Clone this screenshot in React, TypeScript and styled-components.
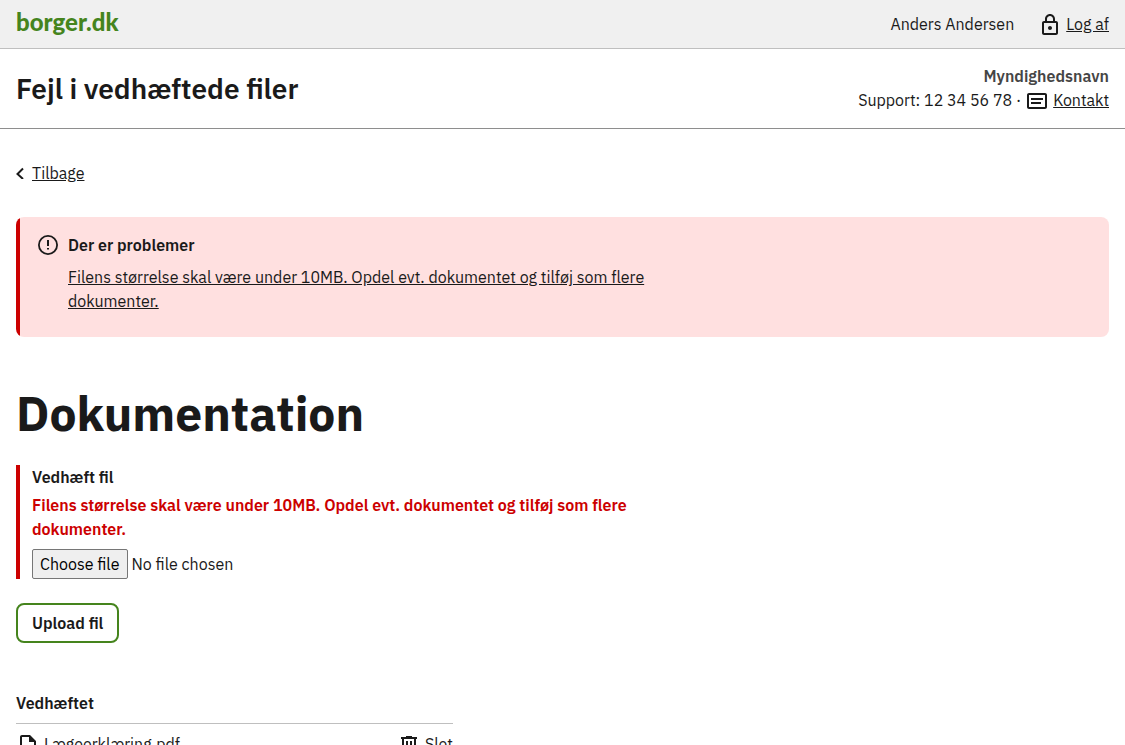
import React, { useState } from "react";
import styled, { createGlobalStyle } from "styled-components";

const GlobalStyle = createGlobalStyle`
  *, *::before, *::after { box-sizing: border-box; }
  body {
    margin: 0;
    background: #fff;
    color: #1a1a1a;
    font-family: "IBM Plex Sans", "Noto Sans", "Open Sans", sans-serif;
    font-size: 16px;
    line-height: 24px;
  }
  h1, h2, p, ul { margin: 0; padding: 0; }
  a { color: inherit; }
`;

const TopBar = styled.div`
  display: flex;
  align-items: center;
  justify-content: space-between;
  min-height: 49px;
  padding: 0 16px;
  background: #f0f0f0;
  border-bottom: 1px solid #bfbfbf;
`;

const Logo = styled.a`
  color: #45841d;
  font-family: Lato, sans-serif;
  font-size: 24px;
  font-weight: 900;
  line-height: 24px;
  text-decoration: none;
  padding-bottom: 4px;
`;

const Session = styled.div`
  display: flex;
  align-items: center;
  gap: 24px;
`;

const IconText = styled.span<{ $gap?: number }>`
  display: inline-flex;
  align-items: center;
  gap: ${(p) => p.$gap ?? 4}px;
`;

const SolutionHeader = styled.header`
  display: flex;
  align-items: center;
  justify-content: space-between;
  padding: 15px 16px 16px;
  border-bottom: 1px solid #8e8e8e;
`;

const SolutionTitle = styled.p`
  padding-top: 2px;
  font-size: 28px;
  font-weight: 600;
  line-height: 32px;
`;

const Authority = styled.div`
  text-align: right;
`;

const AuthorityName = styled.p`
  color: #454545;
  font-weight: 600;
`;

const Support = styled.p`
  display: flex;
  align-items: center;
  justify-content: flex-end;
  gap: 4px;
`;

const Main = styled.main`
  padding: 32px 16px 48px;
`;

const Alert = styled.section`
  display: flex;
  gap: 8px;
  margin-top: 32px;
  padding: 16px 16px 24px 20px;
  background: linear-gradient(to right, #cc0000 4px, #ffe0e0 4px);
  border-radius: 8px;
`;

const AlertBody = styled.div`
  max-width: 600px;
`;

const AlertTitle = styled.h2`
  margin-bottom: 8px;
  font-size: 16px;
  font-weight: 600;
  line-height: 24px;
`;

const PageTitle = styled.h1`
  margin: 48px 0 24px;
  font-size: 48px;
  font-weight: 700;
  line-height: 56px;
`;

const FieldGroup = styled.div`
  max-width: 640px;
  padding-left: 12px;
  border-left: 4px solid #cc0000;
`;

const Label = styled.label`
  display: block;
  font-weight: 600;
`;

const FieldError = styled.p`
  margin: 4px 0 8px;
  color: #cc0000;
  font-weight: 600;
`;

const FilePicker = styled.div`
  position: relative;
  display: flex;
  align-items: center;
  gap: 4px;
`;

const FileInput = styled.input`
  position: absolute;
  inset: 0;
  width: 100%;
  opacity: 0;
`;

const PickerButton = styled.span`
  padding: 2px 7px;
  background: #efefef;
  color: #000;
  border: 1px solid #767676;
  border-radius: 2px;

  ${FileInput}:focus-visible + & {
    outline: 2px solid #1a1a1a;
  }
`;

const UploadButton = styled.button`
  height: 40px;
  margin-top: 24px;
  padding: 0 14px;
  background: #fff;
  color: inherit;
  border: 2px solid #45841d;
  border-radius: 8px;
  font: inherit;
  font-weight: 600;
`;

const Attachments = styled.section`
  max-width: 437px;
  margin-top: 48px;
`;

const ListTitle = styled.h2`
  margin-bottom: 8px;
  font-size: 16px;
  font-weight: 600;
  line-height: 24px;
`;

const FileList = styled.ul`
  list-style: none;
  border-top: 1px solid #bfbfbf;
`;

const FileRow = styled.li`
  display: flex;
  justify-content: space-between;
  padding: 8px 0;
  border-bottom: 1px solid #bfbfbf;
`;

const DeleteButton = styled.button`
  display: inline-flex;
  align-items: center;
  gap: 4px;
  padding: 0;
  background: none;
  color: inherit;
  border: 0;
  font: inherit;
`;

const Icon = styled.svg`
  flex: none;
  display: block;
  width: 24px;
  height: 24px;
  fill: currentColor;
`;

const LockIcon = () => (
  <Icon viewBox="0 0 24 24" aria-hidden="true">
    <path d="M18 9h-1V7c0-2.760-2.240-5-5-5S7 4.240 7 7v2H6c-1.100 0-2 .9-2 2v10c0 1.100.9 2 2 2h12c1.100 0 2-.9 2-2V11c0-1.100-.9-2-2-2zM9 7c0-1.660 1.340-3 3-3s3 1.340 3 3v2H9V7zm9 14H6V11h12v10zm-6-3c1.100 0 2-.9 2-2s-.9-2-2-2-2 .9-2 2 .9 2 2 2z" />
  </Icon>
);

const ContactIcon = () => (
  <Icon viewBox="0 0 24 24" aria-hidden="true">
    <path d="M20 5H4c-1.100 0-2 .9-2 2v12c0 1.100.9 2 2 2h16c1.100 0 2-.9 2-2V7c0-1.100-.9-2-2-2zm0 14H4V7h16v12zM6 10h12v2H6zm0 4h10v2H6z" />
  </Icon>
);

const BackIcon = styled.svg`
  display: block;
  width: 8px;
  height: 12px;
  fill: none;
  stroke: currentColor;
  stroke-width: 2;
`;

const ErrorIcon = () => (
  <Icon viewBox="0 0 24 24" aria-hidden="true">
    <path d="M12 2a10 10 0 1 0 0 20 10 10 0 0 0 0-20zm0 18.200a8.200 8.200 0 1 1 0-16.400 8.200 8.200 0 0 1 0 16.400zM11 7h2v6h-2zm0 8h2v1.500h-2z" />
  </Icon>
);

const FileIcon = () => (
  <Icon viewBox="0 0 24 24" aria-hidden="true">
    <path d="M14 3H6c-1.100 0-2 .9-2 2v14c0 1.100.9 2 2 2h12c1.100 0 2-.9 2-2V9zM6 19V5h7v5h5v9z" />
  </Icon>
);

const TrashIcon = () => (
  <Icon viewBox="0 0 24 24" aria-hidden="true">
    <path d="M9 4h6v1h5v2h-1v13c0 1.100-.9 2-2 2H7c-1.100 0-2-.9-2-2V7H4V5h5zM7 7v13h10V7zm2 2h2v9H9zm4 0h2v9h-2z" />
  </Icon>
);

const errorText =
  "Filens størrelse skal være under 10MB. Opdel evt. dokumentet og tilføj som flere dokumenter.";

export default function App() {
  const [fileName, setFileName] = useState("No file chosen");

  return (
    <>
      <GlobalStyle />
      <TopBar>
        <Logo href="#">borger.dk</Logo>
        <Session>
          <span>Anders Andersen</span>
          <IconText>
            <LockIcon />
            <a href="#">Log af</a>
          </IconText>
        </Session>
      </TopBar>
      <SolutionHeader>
        <SolutionTitle>Fejl i vedhæftede filer</SolutionTitle>
        <Authority>
          <AuthorityName>Myndighedsnavn</AuthorityName>
          <Support>
            <span>Support: 12 34 56 78 ·</span>
            <IconText>
              <ContactIcon />
              <a href="#">Kontakt</a>
            </IconText>
          </Support>
        </Authority>
      </SolutionHeader>
      <Main>
        <IconText $gap={8}>
          <BackIcon viewBox="0 0 8 12" aria-hidden="true">
            <path d="M7 1.500 1.500 7l5.500 5" />
          </BackIcon>
          <a href="#">Tilbage</a>
        </IconText>
        <Alert role="alert">
          <ErrorIcon />
          <AlertBody>
            <AlertTitle>Der er problemer</AlertTitle>
            <a href="#file">{errorText}</a>
          </AlertBody>
        </Alert>
        <PageTitle>Dokumentation</PageTitle>
        <FieldGroup>
          <Label htmlFor="file">Vedhæft fil</Label>
          <FieldError id="file-error">{errorText}</FieldError>
          <FilePicker>
            <FileInput
              id="file"
              type="file"
              aria-describedby="file-error"
              onChange={(e) =>
                setFileName(e.target.files?.[0]?.name ?? "No file chosen")
              }
            />
            <PickerButton aria-hidden="true">Choose file</PickerButton>
            <span>{fileName}</span>
          </FilePicker>
        </FieldGroup>
        <UploadButton type="button">Upload fil</UploadButton>
        <Attachments>
          <ListTitle>Vedhæftet</ListTitle>
          <FileList>
            <FileRow>
              <IconText>
                <FileIcon />
                Lægeerklæring.pdf
              </IconText>
              <DeleteButton type="button">
                <TrashIcon />
                Slet
              </DeleteButton>
            </FileRow>
          </FileList>
        </Attachments>
      </Main>
    </>
  );
}
